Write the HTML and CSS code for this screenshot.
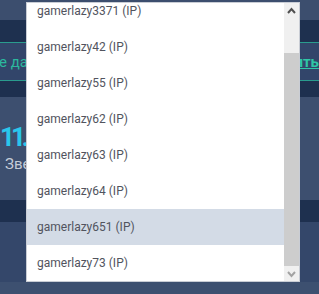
FILE: index.html
```html
<!DOCTYPE html>
<html lang="ru">
<head>
    <meta charset="UTF-8">
    <meta name="viewport" content="width=device-width, initial-scale=1.0">
    <title>Выбор аккаунта</title>
    <link rel="stylesheet" href="styles.css">
</head>
<body>

<!-- Page behind the open list -->
<div class="page">
    <div class="topbar"></div>
    <div class="nav"></div>
    <div class="actions">
        <span class="confirm">е данные</span>
        <a class="edit" href="#">Изменить</a>
    </div>
    <div class="band"></div>
    <div class="stats">
        <div class="value">11.5</div>
        <div class="label">Звезды</div>
    </div>
    <div class="band band-wide"></div>
    <div class="rows"></div>
    <div class="footer"></div>
</div>

<!-- Open account list -->
<div class="dropdown">
    <ul class="options">
        <li>gamerlazy3371 (IP)</li>
        <li>gamerlazy42 (IP)</li>
        <li>gamerlazy55 (IP)</li>
        <li>gamerlazy62 (IP)</li>
        <li>gamerlazy63 (IP)</li>
        <li>gamerlazy64 (IP)</li>
        <li class="active">gamerlazy651 (IP)</li>
        <li>gamerlazy73 (IP)</li>
    </ul>
    <div class="scrollbar">
        <span class="arrow">
            <svg width="15" height="15" viewBox="0 0 15 15"><path d="M4 10 L7.5 6 L11 10" fill="none" stroke="#505050" stroke-width="2"/></svg>
        </span>
        <span class="track"></span>
        <span class="thumb"></span>
        <span class="arrow">
            <svg width="15" height="15" viewBox="0 0 15 15"><path d="M4 6 L7.5 10 L11 6" fill="none" stroke="#a3a3a3" stroke-width="2"/></svg>
        </span>
    </div>
</div>

</body>
</html>
```

FILE: styles.css
```css
/* General body settings */
body {
    font-family: Roboto, "Noto Sans", sans-serif;
    background-color: #3d5070;
    margin: 0;
    overflow: hidden;
}

/* Page blocks */
.topbar {
    height: 20px;
    background-color: #3c4e6e;
}

.nav {
    height: 22px;
    background-color: #1e304f;
}

.actions {
    height: 37px;
    display: flex;
    justify-content: space-between;
    align-items: center;
    background-color: #32456a;
    border-top: 1px solid #2a9c8e;
    border-bottom: 1px solid #2a9c8e;
    font-size: 15px;
    color: #2bb89d;
}

.confirm {
    margin-left: -1px;
}

.edit {
    color: #2fc6a6;
    font-weight: bold;
    text-decoration: underline;
}

.band {
    height: 16px;
    background-color: #1e304f;
}

.band-wide {
    height: 22px;
}

.stats {
    height: 78px;
    padding: 25px 0 0 0;
    background-color: #3d4f6f;
}

.stats .value {
    font-size: 26px;
    line-height: 30px;
    font-weight: bold;
    letter-spacing: -4px;
    color: #29c6ec;
}

.stats .label {
    margin-top: 3px;
    padding-left: 5px;
    font-size: 15px;
    line-height: 18px;
    color: #c5ccd8;
}

.rows {
    height: 60px;
    background-color: #34476a;
}

.footer {
    height: 12px;
    background-color: #3d5070;
}

/* Dropdown list */
.dropdown {
    position: absolute;
    left: 26px;
    top: 2px;
    width: 272px;
    height: 278px;
    display: flex;
    background-color: #fff;
    border: 1px solid #c9cdd5;
    overflow: hidden;
}

.options {
    flex: 1;
    list-style: none;
    margin: -10px 0 0 0;
    padding: 0;
}

.options li {
    height: 36px;
    line-height: 36px;
    padding-left: 10px;
    font-size: 12px;
    color: #51545e;
}

.options li.active {
    background-color: #d3dbe6;
}

/* Scrollbar */
.scrollbar {
    width: 15px;
    display: flex;
    flex-direction: column;
    background-color: #f0f0f0;
}

.arrow {
    height: 15px;
    display: block;
}

.arrow svg {
    display: block;
}

.track {
    height: 35px;
}

.thumb {
    flex: 1;
    background-color: #cdcdcd;
}
```
